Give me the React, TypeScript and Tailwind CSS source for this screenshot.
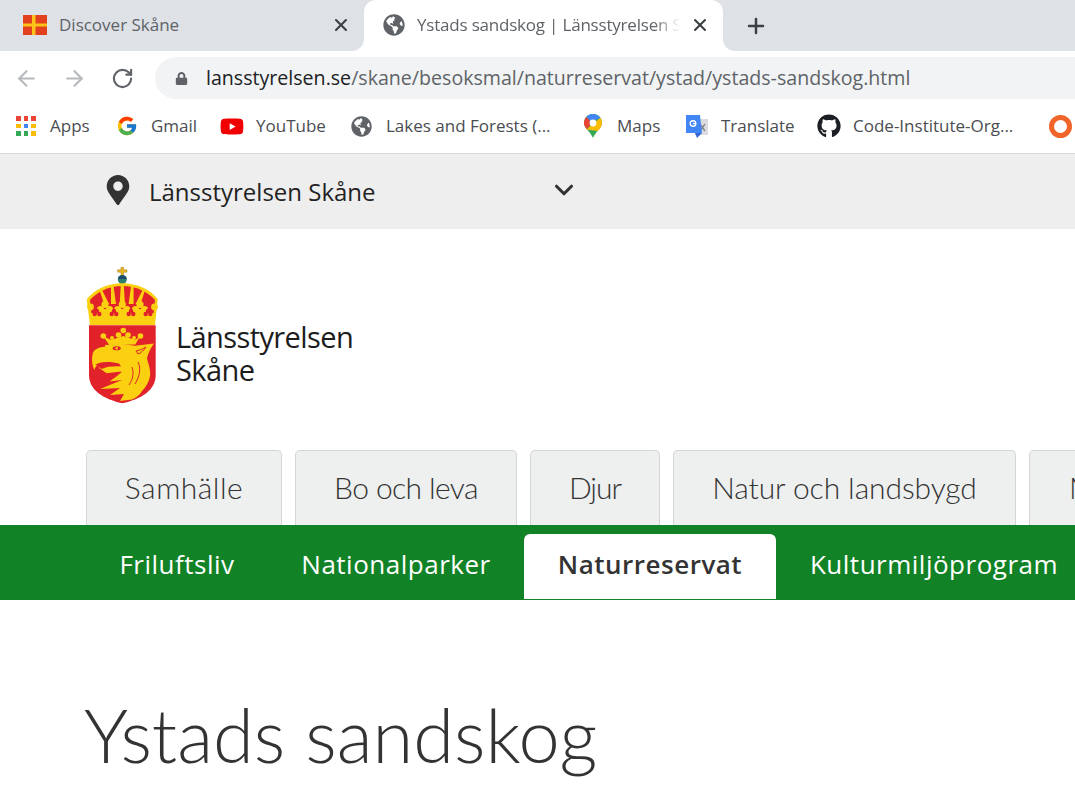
import React from 'react';
import { ArrowLeft, ArrowRight, ChevronDown, Plus, RotateCw, X } from 'lucide-react';
import { FaGithub, FaGlobeAmericas, FaLock, FaMapMarkerAlt, FaYoutube } from 'react-icons/fa';
import { FcGoogle } from 'react-icons/fc';

const AppsIcon = () => {
  const colors = ['#ea4335', '#ea4335', '#ea4335', '#fbbc04', '#4285f4', '#fbbc04', '#34a853', '#34a853', '#fbbc04'];
  return (
    <div className="grid h-[20px] w-[20px] grid-cols-3 gap-[3px]">
      {colors.map((color, index) => (
        <span key={index} style={{ backgroundColor: color }} />
      ))}
    </div>
  );
};

const MapsIcon = () => (
  <svg width="20" height="24" viewBox="0 0 20 24">
    <path d="M10 0C4.500 0 1 4 1 9c0 5 6 8 9 15 3-7 9-10 9-15 0-5-3.500-9-9-9z" fill="#34a853" />
    <path d="M3.300 15.500 17.300 3.700C18.400 5.200 19 7 19 9c0 3-2 5.500-4 8z" fill="#fbbc04" />
    <path d="M10 0C7.200 0 4.800 1.100 3.300 3.100L8 8l9.400-4.300C15.800 1.400 13.200 0 10 0z" fill="#4285f4" />
    <path d="M3.300 3.100C1.900 4.600 1 6.700 1 9c0 2.500 1.200 4.400 2.700 6.300L9 9z" fill="#ea4335" />
    <circle cx="10" cy="9" r="3.400" fill="#fff" />
  </svg>
);

const TranslateIcon = () => (
  <svg width="24" height="24" viewBox="0 0 24 24">
    <rect x="10" y="5" width="13" height="16" fill="#dadce0" />
    <path d="M15 10l5 7M20 10l-5 7" stroke="#80868b" strokeWidth="1.300" />
    <path d="M1 1h14l2 18H1z" fill="#4285f4" />
    <path d="M10 19h7l-5 5z" fill="#3367d6" />
    <circle cx="8" cy="9.500" r="2.800" fill="none" stroke="#fff" strokeWidth="1.400" />
    <path d="M8 9.500h3" stroke="#fff" strokeWidth="1.200" />
  </svg>
);

const RingIcon = () => <div className="h-[23px] w-[23px] rounded-full border-[5px] border-[#f1652a]" />;

const Flag = () => (
  <svg width="24" height="20" viewBox="0 0 24 20">
    <rect width="24" height="20" fill="#e2401f" />
    <rect x="9" width="3.500" height="20" fill="#fcc419" />
    <rect y="8.500" width="24" height="3" fill="#fcc419" />
  </svg>
);

const YELLOW = '#fbd011';
const RED = '#e1222b';

// coat of arms, coordinates are px offsets inside the logo box
const CoatOfArms = () => (
  <svg width="73" height="137" viewBox="0 0 73 137" className="flex-none">
    {/* orb and cross */}
    <path d="M35 0h2.600v2.800H41v2.400h-3.400V9H35V5.200h-3.400V2.800H35z" fill="#e6b422" stroke="#8d7414" strokeWidth=".4" />
    <circle cx="36.300" cy="12.500" r="4.500" fill="#2e7f6c" />
    <path d="M32 12a4.400 4.400 0 0 1 8.700 0z" fill="#1d4a6e" />
    {/* crown */}
    <path d="M.7 32.300C8 23 21 16.300 36.300 16.300S65 23 71.700 32.300L69 58H4z" fill={YELLOW} />
    <path d="M4 33C11 25 23 19 36.300 19S62 25 69 33l-1.500 15h-62z" fill={RED} />
    <path d="M34.800 18h3l1.200 20h-5.400zM25 19.500l2.500-.8L30 37h-5zM14 24.500l2.200-1.300L23 37h-5zM47.600 19.500l-2.500-.8L42.600 37h5zM58.600 24.500l-2.200-1.300L49.600 37h5z" fill={YELLOW} />
    <g fill={YELLOW}>
      {[19, 36.3, 54].map((cx) => (
        <g key={cx}>
          <circle cx={cx} cy="37.500" r="3.600" />
          <circle cx={cx - 4.500} cy="42.500" r="3.600" />
          <circle cx={cx + 4.500} cy="42.500" r="3.600" />
          <rect x={cx - 6} y="42" width="12" height="7" />
        </g>
      ))}
      <circle cx="4.500" cy="40" r="3.400" />
      <circle cx="68.500" cy="40" r="3.400" />
    </g>
    <path d="M3 46h67v4H3z" fill={YELLOW} />
    <g fill={RED}>
      {[11, 28, 45, 62].map((cx) => (
        <g key={cx}>
          <circle cx={cx} cy="44" r="2.200" />
          <circle cx={cx - 2.300} cy="47" r="2.200" />
          <circle cx={cx + 2.300} cy="47" r="2.200" />
        </g>
      ))}
    </g>
    {/* shield */}
    <path d="M3 58.300h66.700V108c0 15-14 24-33.400 28.300C17 132 3 123 3 108z" fill={RED} />
    <g fill={YELLOW}>
      <circle cx="37.300" cy="63.500" r="2.800" />
      <circle cx="32.500" cy="68" r="2.800" />
      <circle cx="42" cy="68" r="2.800" />
      <circle cx="17.300" cy="69" r="2.800" />
      <circle cx="26" cy="71" r="2" />
      <circle cx="48" cy="71" r="2" />
      <circle cx="54.500" cy="69" r="2.800" />
      <path d="M17 69l8 4 12.300-4 12 4 5-4-5 8.500-26 .5z" />
      {/* griffin head and neck */}
      <path d="M19 79.700C13 80 9 82 7.300 85 5.500 90 5.500 97 8.300 103c.7-2.500 2-4.500 4-5.500L13 101l7.700 5.300L33 104.700l3 0-6 5-6.500 4.800L36 113l-22 9 20-1-10 7 14-1-4 7 12-1.500c5-2 8-5 10-8.500 6-6 9-14 8-20-.5-6-2.500-9-3-13 1-4 3-9 7-14.500L49 78.700 35 77 19 78z" />
    </g>
    <path d="M9.500 97.500C15 94 26 94.500 33 96.500l2 3c-7-.5-14 0-19.500 2.500z" fill={RED} />
    <ellipse cx="30.700" cy="81.300" rx="4" ry="2" fill={RED} />
    <circle cx="30.700" cy="81.300" r="1.200" fill={YELLOW} />
    <path d="M50 84c4-1 7-2 10-4-2 3-5 6-8 7zM52 95c3 6 2 14-3 22M46 100c2 6 1 12-3 18" fill="none" stroke={RED} strokeWidth="1" />
  </svg>
);

const bookmarks = [
  { label: 'Apps', icon: <AppsIcon />, width: 'w-[101px]' },
  { label: 'Gmail', icon: <FcGoogle size={22} />, width: 'w-[105px]' },
  { label: 'YouTube', icon: <FaYoutube size={25} color="#f00000" />, width: 'w-[130px]' },
  { label: 'Lakes and Forests (...', icon: <FaGlobeAmericas size={21} color="#5f6368" className="mr-[2px]" />, width: 'w-[231px]' },
  { label: 'Maps', icon: <MapsIcon />, width: 'w-[104px]' },
  { label: 'Translate', icon: <TranslateIcon />, width: 'w-[132px]' },
  { label: 'Code-Institute-Org...', icon: <FaGithub size={24} color="#1b1f23" />, width: 'w-[231px]' },
  { label: '', icon: <RingIcon />, width: 'w-[30px]' },
];

const mainTabs = [
  { label: 'Samhälle', className: 'w-[196px] justify-center tracking-[0.5px]' },
  { label: 'Bo och leva', className: 'w-[222px] justify-center tracking-[-0.6px]' },
  { label: 'Djur', className: 'w-[130px] justify-center tracking-[-1px]' },
  { label: 'Natur och landsbygd', className: 'w-[343px] justify-center tracking-[-0.1px]' },
  { label: 'Miljö och klimat', className: 'w-[300px] pl-[39px]' },
];

const subTabs = [
  { label: 'Friluftsliv', className: 'w-[182px]' },
  { label: 'Nationalparker', className: 'w-[256px]' },
  { label: 'Naturreservat', className: 'w-[252px] bg-white font-semibold text-[#333]' },
  { label: 'Kulturmiljöprogram', className: 'w-[316px]' },
];

export default function App() {
  return (
    <div className="h-[802px] w-full overflow-hidden bg-white font-['Open_Sans',sans-serif]">
      {/* Browser tabs */}
      <div className="flex h-[51px] bg-[linear-gradient(#dee1e6_50%,#ffffff_50%)] text-[17px] text-[#5f6368]">
        <div className="flex w-[364px] flex-none items-center rounded-br-xl bg-[#dee1e6] pb-px pl-[23px] pr-[13px]">
          <Flag />
          <span className="ml-[12px] flex-1 whitespace-nowrap">Discover Skåne</span>
          <X size={20} strokeWidth={2.5} color="#3c4043" />
        </div>
        <div className="flex w-[359px] flex-none items-center rounded-t-xl bg-white pb-px pl-[19px] pr-[13px]">
          <FaGlobeAmericas size={22} color="#5f6368" className="flex-none" />
          <span className="ml-[12px] w-[263px] overflow-hidden whitespace-nowrap tracking-[-0.2px] [mask-image:linear-gradient(to_right,#000_90%,transparent)]">
            Ystads sandskog | Länsstyrelsen Skåne
          </span>
          <X size={20} strokeWidth={2.5} color="#3c4043" className="ml-auto" />
        </div>
        <div className="flex flex-1 items-center rounded-bl-xl bg-[#dee1e6] pl-[21px]">
          <Plus size={24} strokeWidth={2.5} color="#3c4043" />
        </div>
      </div>

      {/* Address bar */}
      <div className="flex h-[51px] items-center pl-[14px] pt-[3px]">
        <ArrowLeft size={25} color="#b6b9bd" strokeWidth={2} />
        <ArrowRight size={25} color="#b6b9bd" strokeWidth={2} className="ml-[23px]" />
        <RotateCw size={23} color="#5f6368" strokeWidth={2.2} className="ml-[24px]" />
        <div className="ml-[21px] flex h-[42px] flex-1 items-center rounded-l-full bg-[#f1f3f4] pl-[20px] text-[19.6px]">
          <FaLock size={13} color="#5f6368" />
          <span className="ml-[18px] whitespace-nowrap text-[#202124]">lansstyrelsen.se</span>
          <span className="whitespace-nowrap text-[#5f6368]">/skane/besoksmal/naturreservat/ystad/ystads-sandskog.html</span>
        </div>
      </div>

      {/* Bookmarks */}
      <div className="flex h-[52px] items-center overflow-hidden border-b border-[#d6d8da] pb-[3px] pl-[14px] text-[17px] text-[#4a4d51]">
        {bookmarks.map((bookmark) => (
          <div key={bookmark.label} className={`flex flex-none items-center ${bookmark.width}`}>
            <span className="flex w-[24px] flex-none justify-center">{bookmark.icon}</span>
            <span className="ml-[12px] whitespace-nowrap">{bookmark.label}</span>
          </div>
        ))}
      </div>

      {/* County selector */}
      <div className="flex h-[75px] items-center bg-[#eeeeee] pl-[103px] text-[#222]">
        <FaMapMarkerAlt size={30} color="#333" className="mb-[4px]" />
        <span className="ml-[16px] w-[400px] text-[24px]">Länsstyrelsen Skåne</span>
        <ChevronDown size={30} strokeWidth={2.5} color="#333" className="mb-[3px]" />
      </div>

      {/* Logo */}
      <div className="flex h-[221px] items-start pl-[86px] pt-[38px]">
        <CoatOfArms />
        <div className="ml-[17px] mt-[53px] text-[29px] leading-[33px] tracking-[-0.6px] text-[#1c1c1c]">
          Länsstyrelsen
          <br />
          Skåne
        </div>
      </div>

      {/* Main nav */}
      <div className="flex h-[75px] gap-[13px] overflow-hidden pl-[86px] font-['Lato',sans-serif] text-[30px] font-light text-[#333]">
        {mainTabs.map((tab) => (
          <div key={tab.label} className={`flex flex-none items-center whitespace-nowrap rounded-t-[5px] border border-b-0 border-[#d4d6d6] bg-[#eeefef] pb-[2px] ${tab.className}`}>
            {tab.label}
          </div>
        ))}
      </div>

      {/* Sub nav */}
      <div className="flex h-[75px] items-end bg-[#118226] pb-px pl-[86px] text-[26px] font-medium tracking-[0.5px] text-white">
        {subTabs.map((tab) => (
          <div key={tab.label} className={`flex h-[65px] flex-none items-center justify-center whitespace-nowrap rounded-t-[6px] pb-[5px] ${tab.className}`}>
            {tab.label}
          </div>
        ))}
      </div>

      <h1 className="mt-[92px] pl-[84px] font-['Lato',sans-serif] text-[74px] font-light leading-[86px] text-[#333]">Ystads sandskog</h1>
    </div>
  );
}
